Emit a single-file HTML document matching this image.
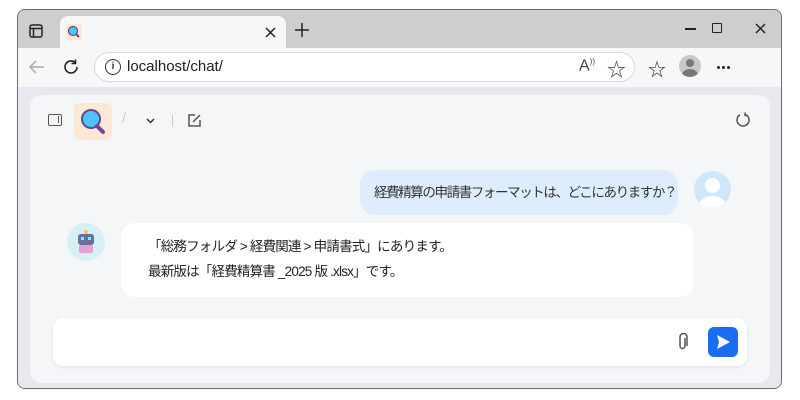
<!DOCTYPE html>
<html><head><meta charset="utf-8"><style>
*{margin:0;padding:0;box-sizing:border-box}
body{width:800px;height:400px;background:#fff;position:relative;overflow:hidden;font-family:"Liberation Sans","Noto Sans CJK JP",sans-serif}
.win{position:absolute;left:17px;top:9px;width:765px;height:380px;border:1px solid #6b6b6b;border-radius:8px;overflow:hidden;background:#fff}
.tabbar{position:absolute;left:0;top:0;width:100%;height:38px;background:#cecece}
.tab{position:absolute;left:42px;top:6px;width:226px;height:32px;background:#f7f7f7;border-radius:8px 8px 0 0}
.toolbar{position:absolute;left:0;top:38px;width:100%;height:39px;background:#f7f7f7}
.url{position:absolute;left:76px;top:4px;width:541px;height:30px;border:1px solid #d8d8d8;border-radius:15px;background:#fff;font-size:15px;color:#222}
.content{position:absolute;left:0;top:77px;width:100%;height:303px;background:#e8e9ee}
.panel{position:absolute;left:12px;top:8px;width:740px;height:288px;background:#f5f6f8;border-radius:12px}
.abs{position:absolute}
</style></head><body>
<div class="win">
 <div class="tabbar">
  <svg class="abs" style="left:11px;top:14px" width="14" height="14" viewBox="0 0 14 14"><rect x="1" y="1" width="12" height="12" rx="2" fill="none" stroke="#222" stroke-width="1.5"/><line x1="1" y1="4.5" x2="13" y2="4.5" stroke="#222" stroke-width="1.5"/><line x1="4.5" y1="4.5" x2="4.5" y2="13" stroke="#222" stroke-width="1.5"/></svg>
  <div class="tab">
   <svg class="abs" style="left:6px;top:8px" width="16" height="16" viewBox="0 0 16 16"><rect width="16" height="16" rx="3" fill="#fde6d2"/><circle cx="7" cy="7" r="4.5" fill="#4fc3f7" stroke="#5b4c8a" stroke-width="1.2"/><line x1="10" y1="10" x2="13" y2="13" stroke="#7b3fa0" stroke-width="2"/></svg>
   <svg class="abs" style="left:205px;top:11px" width="11" height="11" viewBox="0 0 11 11"><path d="M1 1l9 9M10 1l-9 9" stroke="#222" stroke-width="1.5"/></svg>
  </div>
  <svg class="abs" style="left:277px;top:13px" width="14" height="14" viewBox="0 0 14 14"><path d="M7 0v14M0 7h14" stroke="#222" stroke-width="1.5"/></svg>
  <div class="abs" style="left:667px;top:18px;width:11px;height:1.5px;background:#222"></div>
  <div class="abs" style="left:694px;top:13px;width:10px;height:10px;border:1.5px solid #222;border-radius:1px"></div>
  <svg class="abs" style="left:737px;top:13px" width="11" height="11" viewBox="0 0 11 11"><path d="M1 1l9 9M10 1l-9 9" stroke="#222" stroke-width="1.5"/></svg>
 </div>
 <div class="toolbar">
  <svg class="abs" style="left:10px;top:11px" width="17" height="16" viewBox="0 0 17 16"><path d="M16 8H2M8 2L2 8l6 6" fill="none" stroke="#aaa" stroke-width="1.5"/></svg>
  <svg class="abs" style="left:44px;top:10px" width="18" height="18" viewBox="0 0 18 18"><path d="M15 9a6 6 0 1 1-2-4.5" fill="none" stroke="#222" stroke-width="1.6"/><path d="M13.5 1.5v4h-4" fill="none" stroke="#222" stroke-width="1.6"/></svg>
  <div class="url">
   <div class="abs" style="left:10px;top:6px;width:16px;height:16px;border:1.4px solid #333;border-radius:50%;font-size:10px;text-align:center;line-height:13px;font-weight:bold;color:#333">i</div>
   <div class="abs" style="left:32px;top:5px">localhost/chat/</div>
   <div class="abs" style="left:484px;top:4px;font-size:16px;color:#444">A<sup style="font-size:8px">))</sup></div>
   <div class="abs" style="left:512px;top:2px;font-size:19px;color:#444">☆</div>
  </div>
  <div class="abs" style="left:630px;top:8px;font-size:18px;color:#333">☆</div>
  <div class="abs" style="left:661px;top:7px;width:22px;height:22px;border-radius:50%;background:#c8c8c8;overflow:hidden"><div class="abs" style="left:7px;top:4px;width:8px;height:8px;border-radius:50%;background:#777"></div><div class="abs" style="left:3px;top:14px;width:16px;height:12px;border-radius:50%;background:#777"></div></div>
  <div class="abs" style="left:699px;top:18px;width:3px;height:3px;border-radius:50%;background:#222"></div>
  <div class="abs" style="left:704px;top:18px;width:3px;height:3px;border-radius:50%;background:#222"></div>
  <div class="abs" style="left:709px;top:18px;width:3px;height:3px;border-radius:50%;background:#222"></div>
 </div>
 <div class="content"><div class="panel">
  <div class="abs" style="left:18px;top:19px;width:14px;height:12px;border:1.5px solid #555;border-radius:2px"><div class="abs" style="right:2px;top:1px;width:1.5px;height:7px;background:#555"></div></div>
  <div class="abs" style="left:44px;top:8px;width:38px;height:37px;background:#fde8d5;border-radius:6px">
   <svg width="38" height="37" viewBox="0 0 38 37"><circle cx="17" cy="16" r="9" fill="#4fc3f7" stroke="#5b4c8a" stroke-width="2"/><line x1="23" y1="23" x2="29" y2="29" stroke="#7b3fa0" stroke-width="4" stroke-linecap="round"/></svg>
  </div>
  <div class="abs" style="left:92px;top:15px;color:#ccc;font-size:15px">/</div>
  <svg class="abs" style="left:116px;top:23px" width="9" height="6" viewBox="0 0 9 6"><path d="M1 1l3.5 3.5L8 1" fill="none" stroke="#333" stroke-width="1.5"/></svg>
  <div class="abs" style="left:142px;top:20px;width:1px;height:12px;background:#ccc"></div>
  <svg class="abs" style="left:157px;top:18px" width="15" height="15" viewBox="0 0 15 15"><path d="M8 2H2v11h11V7" fill="none" stroke="#555" stroke-width="1.5"/><path d="M6 9l7-7" stroke="#555" stroke-width="1.5"/></svg>
  <svg class="abs" style="left:705px;top:17px" width="16" height="16" viewBox="0 0 16 16"><path d="M10.5 2.5A6 6 0 1 1 5 2.8" fill="none" stroke="#555" stroke-width="1.5"/><path d="M10 0.5v3h3" fill="none" stroke="#555" stroke-width="1.4"/></svg>
  <div class="abs" style="left:330px;top:75px;width:318px;height:45px;background:#deedfd;border-radius:14px;font-size:13.5px;letter-spacing:-1.4px;white-space:nowrap;color:#333;line-height:45px;padding-left:14px">経費精算の申請書フォーマットは、どこにありますか？</div>
  <div class="abs" style="left:664px;top:76px;width:37px;height:37px;border-radius:50%;background:#cfe6fb;overflow:hidden"><div class="abs" style="left:11px;top:7px;width:15px;height:15px;border-radius:50%;background:#fff"></div><div class="abs" style="left:5px;top:25px;width:27px;height:20px;border-radius:50%;background:#fff"></div></div>
  <div class="abs" style="left:37px;top:128px;width:38px;height:38px;border-radius:50%;background:#d6f0f5">
   <div class="abs" style="left:11px;top:11px;width:16px;height:11px;background:#6a6fa0;border-radius:3px"></div>
   <div class="abs" style="left:14px;top:14px;width:3px;height:3px;background:#7ef;"></div><div class="abs" style="left:21px;top:14px;width:3px;height:3px;background:#7ef"></div>
   <div class="abs" style="left:12px;top:22px;width:14px;height:8px;background:#e8a0d0;border-radius:2px"></div>
   <div class="abs" style="left:17px;top:7px;width:4px;height:4px;background:#f5c842;border-radius:50%"></div>
  </div>
  <div class="abs" style="left:91px;top:128px;width:573px;height:74px;background:#fff;border-radius:14px;font-size:13.5px;letter-spacing:-0.8px;white-space:nowrap;color:#222;line-height:25px;padding:11px 0 0 27px">「総務フォルダ &gt; 経費関連 &gt; 申請書式」にあります。<br>最新版は「経費精算書 _2025 版 .xlsx」です。</div>
  <div class="abs" style="left:23px;top:223px;width:694px;height:48px;background:#fff;border-radius:10px;box-shadow:0 1px 4px rgba(0,0,0,0.08)">
   <svg class="abs" style="left:623px;top:15px" width="14" height="18" viewBox="0 0 14 18"><path d="M9 5v8a2.5 2.5 0 0 1-5 0V4a3.5 3.5 0 0 1 7 0v9" fill="none" stroke="#555" stroke-width="1.5"/></svg>
   <div class="abs" style="left:655px;top:9px;width:30px;height:30px;background:#1a6df0;border-radius:6px"><svg width="30" height="30" viewBox="0 0 30 30"><path d="M9 8l13 7L9 22l2-7z" fill="#fff"/></svg></div>
  </div>
 </div></div>
</div>
</body></html>
